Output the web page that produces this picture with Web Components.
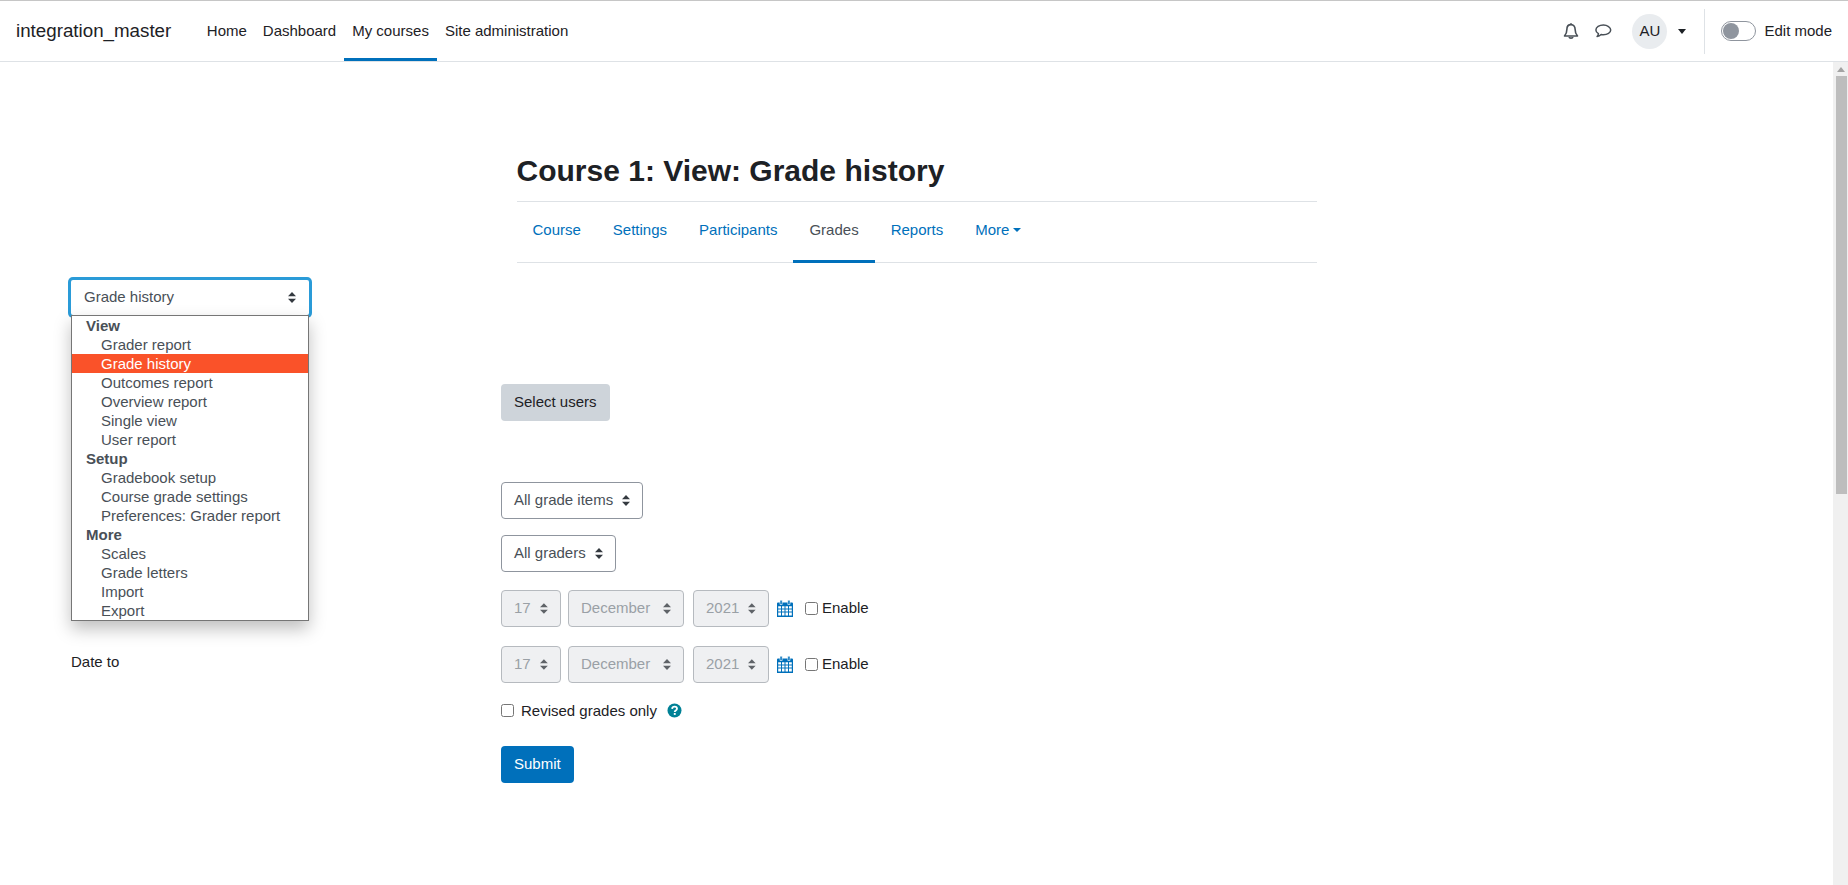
<!DOCTYPE html>
<html lang="en">
<head>
<meta charset="utf-8">
<title>Course 1: View: Grade history</title>
<style>
    html, body { margin: 0; height: 100%; overflow: hidden; }
    body {
        font-family: "Liberation Sans", Arial, sans-serif;
        font-size: 15px;
        line-height: 22.5px;
        color: #1d2125;
        background: #fff;
    }
</style>
</head>
<body>
<moodle-page>
    <top-nav slot="nav" brand="integration_master">
        <nav-link>Home</nav-link>
        <nav-link>Dashboard</nav-link>
        <nav-link active>My courses</nav-link>
        <nav-link>Site administration</nav-link>
    </top-nav>

    <page-header>Course 1: View: Grade history</page-header>
    <course-tabs>
        <tab-link>Course</tab-link>
        <tab-link>Settings</tab-link>
        <tab-link>Participants</tab-link>
        <tab-link active>Grades</tab-link>
        <tab-link>Reports</tab-link>
        <tab-link caret>More</tab-link>
    </course-tabs>

    <report-jump>
        <jump-group label="View">
            <jump-option>Grader report</jump-option>
            <jump-option selected>Grade history</jump-option>
            <jump-option>Outcomes report</jump-option>
            <jump-option>Overview report</jump-option>
            <jump-option>Single view</jump-option>
            <jump-option>User report</jump-option>
        </jump-group>
        <jump-group label="Setup">
            <jump-option>Gradebook setup</jump-option>
            <jump-option>Course grade settings</jump-option>
            <jump-option>Preferences: Grader report</jump-option>
        </jump-group>
        <jump-group label="More">
            <jump-option>Scales</jump-option>
            <jump-option>Grade letters</jump-option>
            <jump-option>Import</jump-option>
            <jump-option>Export</jump-option>
        </jump-group>
    </report-jump>

    <form-row style="margin-top:69px"><mdl-button>Select users</mdl-button></form-row>
    <form-row style="margin-top:61px"><mdl-select>All grade items</mdl-select></form-row>
    <form-row style="margin-top:16px"><mdl-select>All graders</mdl-select></form-row>
    <form-row style="margin-top:18px"><date-field></date-field></form-row>
    <form-row style="margin-top:19px" label="Date to"><date-field></date-field></form-row>
    <form-row style="margin-top:17px"><revised-check>Revised grades only</revised-check></form-row>
    <form-row style="margin-top:24px"><mdl-button primary>Submit</mdl-button></form-row>
</moodle-page>

<script>
const ARROWS = `<svg width="8" height="11" viewBox="0 0 8 11"><path d="M4 0L8 4.3H0zM4 11L0 6.7H8z" fill="currentColor"/></svg>`;

class MoodlePage extends HTMLElement {
    constructor() {
        super();
        this.attachShadow({ mode: 'open' });
    }

    connectedCallback() {
        this.shadowRoot.innerHTML = `
        <style>
            :host { display: flex; flex-direction: column; height: 885px; }
            .body { flex: 1; display: flex; min-height: 0; }
            main { flex: 1; padding: 91px 0 0 71px; overflow: hidden; }
            .bar { width: 15px; background: #f0f0f0; display: flex; flex-direction: column; align-items: center; }
            .arrow { width: 0; height: 0; margin: 5px 0 4px; border: 4px solid transparent; border-top: 0; border-bottom: 5px solid #a3a3a3; }
            .thumb { width: 11px; height: 418px; margin-left: 1px; background: #bdbdbd; }
        </style>
        <slot name="nav"></slot>
        <div class="body">
            <main><slot></slot></main>
            <div class="bar"><div class="arrow"></div><div class="thumb"></div></div>
        </div>`;
    }
}

class TopNav extends HTMLElement {
    constructor() {
        super();
        this.attachShadow({ mode: 'open' });
    }

    connectedCallback() {
        this.shadowRoot.innerHTML = `
        <style>
            :host {
                display: flex;
                align-items: stretch;
                height: 60px;
                flex: none;
                border-top: 1px solid #c6c6c6;
                border-bottom: 1px solid #dee2e6;
                padding-left: 16px;
            }
            .brand { font-size: 18.75px; align-self: center; margin-right: 27.5px; }
            .links { display: flex; flex: 1; }
            .tools { display: flex; align-items: center; color: #495057; }
            .chat { margin-left: 16px; }
            .avatar {
                width: 35px; height: 35px; margin-left: 20px; border-radius: 50%;
                background: #e9ecef; color: #1d2125; display: flex; align-items: center; justify-content: center;
            }
            .caret { width: 0; height: 0; margin-left: 11px; border: 4.5px solid transparent; border-bottom: 0; border-top: 5px solid #1d2125; }
            .divider { width: 1px; height: 45px; background: #dee2e6; margin-left: 18px; }
            .toggle {
                box-sizing: border-box; width: 35px; height: 20px; margin-left: 16px; border-radius: 10px;
                border: 1px solid #8f959e; background: #fff; padding: 1px;
            }
            .toggle i { display: block; width: 16px; height: 16px; border-radius: 50%; background: #8f959e; }
            .edit { margin-left: 8px; margin-right: 16px; color: #1d2125; }
        </style>
        <div class="brand">${this.getAttribute('brand')}</div>
        <div class="links"><slot></slot></div>
        <div class="tools">
            <svg class="bell" width="16" height="17" viewBox="0 0 16 17" fill="none" stroke="currentColor" stroke-width="1.6" stroke-linejoin="round">
                <path d="M8 1.600C5.300 1.600 3.900 3.600 3.900 6.200c0 3.400-.8 5-2.400 6.800h13c-1.600-1.800-2.400-3.400-2.400-6.800 0-2.600-1.400-4.600-4.100-4.600z"/>
                <path d="M6.200 14c.2 1.500 3.400 1.500 3.600 0" stroke-width="1.800"/>
                <path d="M8 .3v1.400"/>
            </svg>
            <svg class="chat" width="17" height="16" viewBox="0 0 17 16" fill="none" stroke="currentColor" stroke-width="1.500" stroke-linejoin="round">
                <path d="M8.700 2C4.600 2 1.200 4.200 1.200 7c0 1.500 1 2.800 2.500 3.700-.1 1-.6 2-1.300 2.800 1.600-.2 3-1 4-2 .7.100 1.500.2 2.300.2 4 0 7.300-2.100 7.300-4.700S12.700 2 8.700 2z" transform="translate(-.3 0)"/>
            </svg>
            <div class="avatar">AU</div>
            <div class="caret"></div>
            <div class="divider"></div>
            <div class="toggle"><i></i></div>
            <div class="edit">Edit mode</div>
        </div>`;
    }
}

class NavLink extends HTMLElement {
    constructor() {
        super();
        this.attachShadow({ mode: 'open' });
    }

    connectedCallback() {
        this.shadowRoot.innerHTML = `
        <style>
            :host { display: flex; align-items: center; padding: 0 8px; box-sizing: border-box; border-bottom: 3px solid transparent; padding-top: 3px; }
            :host([active]) { border-bottom-color: #0070bb; }
        </style>
        <slot></slot>`;
    }
}

class PageHeader extends HTMLElement {
    constructor() {
        super();
        this.attachShadow({ mode: 'open' });
    }

    connectedCallback() {
        this.shadowRoot.innerHTML = `
        <style>
            :host {
                display: block; width: 800px; margin-left: 445.5px; padding-bottom: 12px;
                border-bottom: 1px solid #dee2e6;
                font-size: 30px; line-height: 36px; font-weight: 700;
            }
        </style>
        <slot></slot>`;
    }
}

class CourseTabs extends HTMLElement {
    constructor() {
        super();
        this.attachShadow({ mode: 'open' });
    }

    connectedCallback() {
        this.shadowRoot.innerHTML = `
        <style>
            :host {
                display: flex; width: 800px; height: 60px; margin-left: 445.5px;
                border-bottom: 1px solid #dee2e6;
            }
        </style>
        <slot></slot>`;
    }
}

class TabLink extends HTMLElement {
    constructor() {
        super();
        this.attachShadow({ mode: 'open' });
    }

    connectedCallback() {
        let caret = this.hasAttribute('caret') ? '<span class="caret"></span>' : '';
        this.shadowRoot.innerHTML = `
        <style>
            :host {
                display: flex; align-items: center; padding: 0 16px 2px; color: #0070bb;
                box-sizing: border-box; border-bottom: 3px solid transparent; margin-bottom: -1px;
            }
            :host([active]) { color: #495057; border-bottom-color: #0070bb; }
            .caret { width: 0; height: 0; margin-left: 4px; border: 4.5px solid transparent; border-bottom: 0; border-top: 4.5px solid currentColor; }
        </style>
        <slot></slot>${caret}`;
    }
}

class ReportJump extends HTMLElement {
    constructor() {
        super();
        this.attachShadow({ mode: 'open' });
    }

    connectedCallback() {
        this.shadowRoot.innerHTML = `
        <style>
            :host { display: block; position: relative; width: 238px; height: 35px; margin-top: 17px; color: #495057; z-index: 2; }
            .box {
                box-sizing: border-box; height: 35px; display: flex; align-items: center; justify-content: space-between;
                padding: 0 13px; border-radius: 2px; background: #fff;
                box-shadow: 0 0 0 3px #2a9bd8;
            }
            .box svg { color: #343a40; margin-left: 9px; }
            .list {
                position: absolute; left: 0; top: 35px; width: 238px; box-sizing: border-box; height: 306px;
                background: #fff; border: 1px solid #767676;
                box-shadow: 0 8px 16px rgba(0, 0, 0, .25);
                line-height: 19px;
            }
        </style>
        <div class="box"><span>Grade history</span>${ARROWS}</div>
        <div class="list"><slot></slot></div>`;
    }
}

class JumpGroup extends HTMLElement {
    constructor() {
        super();
        this.attachShadow({ mode: 'open' });
    }

    connectedCallback() {
        this.shadowRoot.innerHTML = `
        <style>
            :host { display: block; }
            .label { font-weight: 700; padding-left: 14px; height: 19px; }
        </style>
        <div class="label">${this.getAttribute('label')}</div>
        <slot></slot>`;
    }
}

class JumpOption extends HTMLElement {
    constructor() {
        super();
        this.attachShadow({ mode: 'open' });
    }

    connectedCallback() {
        this.shadowRoot.innerHTML = `
        <style>
            :host { display: block; height: 19px; padding-left: 29px; white-space: nowrap; }
            :host([selected]) { background: #fa5229; color: #fff; }
        </style>
        <slot></slot>`;
    }
}

class FormRow extends HTMLElement {
    constructor() {
        super();
        this.attachShadow({ mode: 'open' });
    }

    connectedCallback() {
        let label = this.getAttribute('label') || '';
        this.shadowRoot.innerHTML = `
        <style>
            :host { display: grid; grid-template-columns: 430px 1fr; align-items: center; }
            .label { margin-bottom: 3px; }
            .field { display: flex; align-items: center; }
        </style>
        <div class="label">${label}</div>
        <div class="field"><slot></slot></div>`;
    }
}

class MdlButton extends HTMLElement {
    constructor() {
        super();
        this.attachShadow({ mode: 'open' });
    }

    connectedCallback() {
        this.shadowRoot.innerHTML = `
        <style>
            :host {
                display: inline-flex; align-items: center; box-sizing: border-box; height: 36.5px; padding: 0 13px;
                border-radius: 4px; background: #ced4da; color: #1d2125;
            }
            :host([primary]) { background: #0070bb; color: #fff; }
        </style>
        <slot></slot>`;
    }
}

class MdlSelect extends HTMLElement {
    constructor() {
        super();
        this.attachShadow({ mode: 'open' });
    }

    connectedCallback() {
        this.shadowRoot.innerHTML = `
        <style>
            :host {
                display: inline-flex; align-items: center; justify-content: space-between; box-sizing: border-box; height: 37px; padding: 0 12px;
                border: 1px solid #8f959e; border-radius: 4px; background: #fff; color: #495057;
            }
            :host([disabled]) { border-color: #b6babf; background: #eff0f2; color: #9aa0a6; }
            svg { margin-left: 9px; color: #343a40; }
            :host([disabled]) svg { color: #5f6368; }
        </style>
        <slot></slot>${ARROWS}`;
    }
}

class DateField extends HTMLElement {
    constructor() {
        super();
        this.attachShadow({ mode: 'open' });
    }

    connectedCallback() {
        this.shadowRoot.innerHTML = `
        <style>
            :host { display: flex; align-items: center; }
            .day { width: 59.5px; margin-right: 7.5px; }
            .month { width: 116px; margin-right: 9px; }
            .year { width: 76px; margin-right: 8px; }
            .cal { margin-right: 12px; }
            input { width: 13px; height: 13px; margin: 0 4px 0 0; }
        </style>
        <mdl-select disabled class="day">17</mdl-select>
        <mdl-select disabled class="month">December</mdl-select>
        <mdl-select disabled class="year">2021</mdl-select>
        <svg class="cal" width="16" height="17" viewBox="0 0 16 17">
            <path d="M0 3.500a1 1 0 0 1 1-1h14a1 1 0 0 1 1 1V17H0z" fill="#0070bb"/>
            <path d="M1.200 6.200h2.800v2.200H1.200zM5 6.200h2.500v2.200H5zM8.500 6.200H11v2.200H8.500zM12 6.200h2.800v2.200H12zM1.200 9.400h2.800v2.200H1.200zM5 9.400h2.500v2.200H5zM8.500 9.400H11v2.200H8.500zM12 9.400h2.800v2.200H12zM1.200 12.600h2.800v2.800H1.200zM5 12.600h2.500v2.800H5zM8.500 12.600H11v2.800H8.500zM12 12.600h2.800v2.800H12z" fill="#fff"/>
            <path d="M3 .2h2.200v4.300H3zM10.800 .2H13v4.300h-2.200z" fill="#0070bb" stroke="#fff" stroke-width=".6"/>
        </svg>
        <input type="checkbox"><span>Enable</span>`;
    }
}

class RevisedCheck extends HTMLElement {
    constructor() {
        super();
        this.attachShadow({ mode: 'open' });
    }

    connectedCallback() {
        this.shadowRoot.innerHTML = `
        <style>
            :host { display: flex; align-items: center; height: 22.5px; }
            input { width: 13px; height: 13px; margin: 0 7px 0 0; }
            svg { margin-left: 10px; }
        </style>
        <input type="checkbox"><slot></slot>
        <svg width="15" height="15" viewBox="0 0 15 15">
            <circle cx="7.500" cy="7.500" r="7" fill="#008196"/>
            <path d="M5.100 5.800c.2-1.400 1.200-2.100 2.500-2.100 1.400 0 2.400.8 2.400 2 0 1.700-2.300 1.700-2.300 3.200" fill="none" stroke="#fff" stroke-width="1.800"/>
            <rect x="6.800" y="10" width="1.900" height="1.900" fill="#fff"/>
        </svg>`;
    }
}

customElements.define('moodle-page', MoodlePage);
customElements.define('top-nav', TopNav);
customElements.define('nav-link', NavLink);
customElements.define('page-header', PageHeader);
customElements.define('course-tabs', CourseTabs);
customElements.define('tab-link', TabLink);
customElements.define('report-jump', ReportJump);
customElements.define('jump-group', JumpGroup);
customElements.define('jump-option', JumpOption);
customElements.define('form-row', FormRow);
customElements.define('mdl-button', MdlButton);
customElements.define('mdl-select', MdlSelect);
customElements.define('date-field', DateField);
customElements.define('revised-check', RevisedCheck);
</script>
</body>
</html>
